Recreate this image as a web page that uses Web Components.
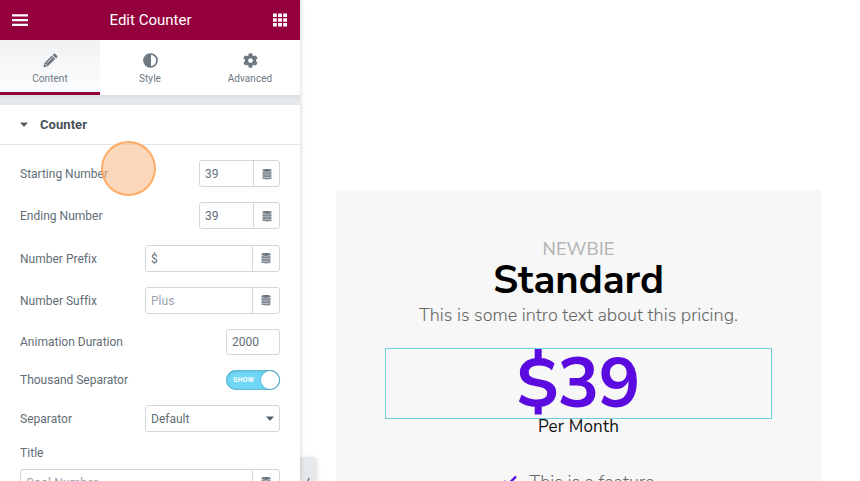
<!DOCTYPE html>
<html lang="en">
<head>
<meta charset="utf-8">
<title>Edit Counter</title>
<style>
html,body{margin:0;height:100%;overflow:hidden;background:#fff}
body{font-family:Roboto,"Liberation Sans",sans-serif}
</style>
</head>
<body>
<counter-editor></counter-editor>
<script>
const define = (name, css, html, setup) => {
  const t = document.createElement('template');
  t.innerHTML = `<style>*{box-sizing:border-box}${css}</style>${html}`;
  customElements.define(name, class extends HTMLElement {
    constructor() { super(); this.attachShadow({mode: 'open'}).append(t.content.cloneNode(true)); }
    connectedCallback() { if (setup) setup(this, this.shadowRoot); }
  });
};

/* A single line of text tracked to a given width. */
define('fit-text', ':host{display:inline-block;white-space:nowrap}span{display:inline-block}', '<span><slot></slot></span>', (el, root) => {
  const s = root.querySelector('span'), w = parseFloat(el.getAttribute('w')), n = el.textContent.length;
  s.style.letterSpacing = '0px';
  const d = (w - s.getBoundingClientRect().width) / n;
  s.style.letterSpacing = d.toFixed(3) + 'px';
});

const glyphs = {
  menu: '<svg width="18" height="14" viewBox="0 0 18 14" fill="#fff"><path d="M1 1.300h16v2.200H1zM1 6h16v2.200H1zM1 10.700h16v2.200H1z"/></svg>',
  grid: '<svg width="14" height="14" viewBox="0 0 14 14" fill="#fff"><path d="M0 .5h3.8v3.6H0zM5.1.5h3.8v3.6H5.1zM10.2.5H14v3.6h-3.8zM0 5.2h3.8v3.6H0zM5.1 5.2h3.8v3.6H5.1zM10.2 5.2H14v3.6h-3.8zM0 9.9h3.8v3.6H0zM5.1 9.9h3.8v3.6H5.1zM10.2 9.9H14v3.6h-3.8z"/></svg>',
  pencil: '<svg width="15" height="15" viewBox="0 0 15 15" fill="#6d7882"><path d="M8.800 2.700l3.400 3.400-7.400 7.200-3.900.9c-.3 0-.5-.1-.4-.4l.9-3.900zM9.600 1.900l1-1c.5-.5 1.200-.5 1.700 0l1.800 1.800c.5.5.5 1.200 0 1.700l-1.100 1z"/><path d="M4 9.900l5.200-5.200M2.400 10.700l.4 1.400 1.400.3" stroke="#f7f8f9" stroke-width=".8" fill="none"/></svg>',
  contrast: '<svg width="15" height="15" viewBox="0 0 15 15"><circle cx="7.500" cy="7.500" r="6.500" fill="none" stroke="#6d7882" stroke-width="1.700"/><path d="M8 1a6.500 6.500 0 0 0 0 13z" fill="#6d7882"/></svg>',
  gear: '<svg width="15" height="15" viewBox="0 0 512 512" fill="#6d7882"><path d="M487.400 315.700l-42.600-24.600c4.300-23.200 4.300-47 0-70.200l42.600-24.600c4.900-2.800 7.100-8.600 5.500-14-11.100-35.600-30-67.800-54.700-94.600-3.800-4.100-10-5.100-14.800-2.300L380.800 110c-17.900-15.400-38.500-27.300-60.800-35.100V25.800c0-5.600-3.900-10.500-9.400-11.700-36.700-8.200-74.300-7.800-109.200 0-5.500 1.200-9.400 6.100-9.400 11.700V75c-22.200 7.900-42.800 19.800-60.800 35.100L88.700 85.500c-4.900-2.800-11-1.900-14.800 2.300-24.700 26.700-43.600 58.900-54.700 94.600-1.700 5.400.6 11.200 5.500 14L67.300 221c-4.300 23.200-4.300 47 0 70.200l-42.600 24.600c-4.900 2.800-7.100 8.600-5.500 14 11.100 35.600 30 67.800 54.700 94.600 3.800 4.100 10 5.100 14.800 2.300l42.600-24.600c17.900 15.400 38.500 27.300 60.800 35.100v49.200c0 5.600 3.900 10.500 9.400 11.700 36.700 8.200 74.300 7.800 109.200 0 5.500-1.200 9.400-6.100 9.400-11.700v-49.200c22.200-7.900 42.800-19.800 60.800-35.100l42.600 24.600c4.900 2.800 11 1.900 14.800-2.300 24.700-26.700 43.600-58.900 54.700-94.600 1.500-5.500-.7-11.300-5.600-14.100zM256 336c-44.100 0-80-35.900-80-80s35.900-80 80-80 80 35.900 80 80-35.900 80-80 80z"/></svg>',
  data: '<svg width="10" height="12" viewBox="0 0 10 12" fill="#6d7882"><path d="M.5 2C.5.600 9.500.600 9.500 2v1.100c0 1.100-9 1.100-9 0z"/><path d="M.5 3.700q4.500 1.300 9 0V6c0 1-9 1-9 0zM.5 6.500q4.500 1.300 9 0v2c0 1-9 1-9 0zM.5 9.100q4.500 1.300 9 0v1.500c0 1.200-9 1.200-9 0z" opacity=".85"/></svg>',
  caret: '<svg width="8" height="5" viewBox="0 0 8 5" fill="#556068"><path d="M0 .4h8L4.700 4.300q-.7.600-1.400 0z"/></svg>',
  check: '<svg width="14" height="12" viewBox="0 0 14 12"><path d="M1 6l3.500 4L13 1.500" fill="none" stroke="#5b0be0" stroke-width="2.400"/></svg>',
  back: '<svg width="5" height="9" viewBox="0 0 5 9"><path d="M3.500 1L1 4.500 3.500 8" fill="none" stroke="#6d7882" stroke-width="1.300"/></svg>'
};
define('ui-icon', ':host{display:inline-flex}svg{display:block}', '', (el, root) => {
  const t = document.createElement('template');
  t.innerHTML = glyphs[el.getAttribute('name')];
  root.append(t.content);
});

define('panel-tab', `
:host{display:flex;flex:1;flex-direction:column;align-items:center;height:55px;padding-top:13px;font-size:10px;line-height:12px;color:#6d7882;border-bottom:3px solid transparent}
:host([active]){background:linear-gradient(#f1f2f4,#fcfdfe);border-bottom-color:#93003c}
::slotted(ui-icon){margin-bottom:5px}`, '<slot name="icon"></slot><slot></slot>');

define('control-row', `
:host{display:flex;justify-content:space-between;align-items:center;height:27px;font-size:12px;color:#626d76}
::slotted([slot=label]){padding-top:1px}`, '<slot name="label"></slot><slot></slot>');

define('text-field', `
:host{display:flex;height:27px;width:135px;border:1px solid #d2d7db;border-radius:3px;background:#fff;color:#626d76;font-size:12px;line-height:26px;overflow:hidden}
:host([muted]){color:#9aa4ad}
.v{flex:1;padding-left:5px}
.d{width:27px;border-left:1px solid #d2d7db;display:flex;align-items:center;justify-content:center}
:host([narrow]) .d{width:26px}
:host([plain]) .d{display:none}
:host([select]) .d{border:0;width:19px}`, '<div class="v"><slot></slot></div><div class="d"><slot name="end"></slot></div>');

define('toggle-switch', `
:host{display:flex;align-items:center;justify-content:space-between;width:54px;height:20px;border-radius:10px;background:#71d7f7;box-shadow:inset 0 0 0 1px #65b8d2,inset 0 1px 3px #4eacc8;padding:0 1px 0 7px;color:#fff;font-size:7px;font-weight:700}
i{width:18px;height:18px;border-radius:50%;background:#fff;box-shadow:0 0 2px #4a8da3}`, '<slot></slot><i></i>');

define('editor-panel', `
:host{display:block;position:relative;width:300px;height:481px;background:#fff;box-shadow:0 0 5px rgba(0,0,0,.2);z-index:1;flex:none}
header{display:flex;height:40px;background:#93003c;color:#fff;align-items:center;justify-content:space-between;padding:0 13px 0 11px;font-size:15px}
header fit-text{margin-left:-1px}
nav{display:flex;height:55px}
.gap{height:10px;background:linear-gradient(#dcdfe2,#e6e9ec 5px)}
.section{display:flex;align-items:center;height:40px;border-bottom:1px solid #e2e5e8;padding-left:20px;gap:12px;font-size:13px;font-weight:700;color:#495157}
.rows{display:flex;flex-direction:column;gap:15px;padding:15px 20px 0;height:336px;overflow:hidden}
.rows>*{flex:none}
.title{font-size:12px;line-height:12px;height:9px;padding-top:3px;display:flex;align-items:center;color:#626d76}
.click{position:absolute;left:101px;top:141px;width:55px;height:55px;border-radius:50%;border:2px solid rgba(255,160,82,.8);background:rgba(250,182,130,.55)}`, `
<header><ui-icon name="menu"></ui-icon><fit-text w="82">Edit Counter</fit-text><ui-icon name="grid"></ui-icon></header>
<nav><panel-tab active><ui-icon slot="icon" name="pencil"></ui-icon><fit-text w="35.500">Content</fit-text></panel-tab><panel-tab><ui-icon slot="icon" name="contrast"></ui-icon><fit-text w="22">Style</fit-text></panel-tab><panel-tab><ui-icon slot="icon" name="gear"></ui-icon><fit-text w="44.500">Advanced</fit-text></panel-tab></nav>
<div class="gap"></div>
<div class="section"><ui-icon name="caret"></ui-icon><fit-text w="47">Counter</fit-text></div>
<div class="rows">
<control-row><fit-text slot="label" w="88">Starting Number</fit-text><text-field narrow style="width:81px">39<ui-icon slot="end" name="data"></ui-icon></text-field></control-row>
<control-row><fit-text slot="label" w="82.500">Ending Number</fit-text><text-field narrow style="width:81px">39<ui-icon slot="end" name="data"></ui-icon></text-field></control-row>
<control-row style="height:28px"><fit-text slot="label" w="76.500">Number Prefix</fit-text><text-field>$<ui-icon slot="end" name="data"></ui-icon></text-field></control-row>
<control-row style="margin-top:-.5px"><fit-text slot="label" w="76">Number Suffix</fit-text><text-field muted><fit-text w="23.500">Plus</fit-text><ui-icon slot="end" name="data"></ui-icon></text-field></control-row>
<control-row style="height:26px"><fit-text slot="label" w="103">Animation Duration</fit-text><text-field plain style="width:54px;height:26px;line-height:25px">2000</text-field></control-row>
<control-row style="height:20px"><fit-text slot="label" w="108">Thousand Separator</fit-text><toggle-switch><fit-text w="21">SHOW</fit-text></toggle-switch></control-row>
<control-row><fit-text slot="label" w="52">Separator</fit-text><text-field select><fit-text w="38.500">Default</fit-text><ui-icon slot="end" name="caret"></ui-icon></text-field></control-row>
<div class="title"><fit-text w="23.500">Title</fit-text></div>
<text-field muted style="width:260px;margin-top:-2px"><fit-text w="72">Cool Number</fit-text><ui-icon slot="end" name="data"></ui-icon></text-field>
</div>
<div class="click"></div>`);

define('pricing-card', `
:host{display:flex;flex-direction:column;align-items:center;width:485px;height:291px;background:#f7f7f7;padding:48px 49px 0;overflow:hidden;font-family:"Nunito Sans",Nunito,Lato,sans-serif}
div{flex:none}
.tag{height:22px;line-height:22px;font-size:18px;color:#b4b4b4;font-weight:500}
.name{height:42px;line-height:40px;font-size:40px;color:#000;font-weight:700}
.intro{height:26px;line-height:26px;font-size:18px;color:#686868;font-weight:300}
.price{margin-top:20px;width:387px;height:71px;border:1px solid #71cfe0;text-align:center;font-size:70px;line-height:70px;font-weight:700;color:#5b0be0}
.price fit-text{margin-left:-1px}
.per{height:17px;line-height:15px;font-size:17px;color:#111}
.feature{margin-top:34px;display:flex;gap:13px;line-height:24px;height:24px;font-size:18px;font-weight:300;color:#686868}
.feature ui-icon{margin-top:5px}`, `
<div class="tag"><fit-text w="72">NEWBIE</fit-text></div>
<div class="name"><fit-text w="171">Standard</fit-text></div>
<div class="intro"><fit-text w="319">This is some intro text about this pricing.</fit-text></div>
<div class="price"><fit-text w="123">$39</fit-text></div>
<div class="per"><fit-text w="81">Per Month</fit-text></div>
<div class="feature"><ui-icon name="check"></ui-icon><fit-text w="125">This is a feature</fit-text></div>`);

define('counter-editor', `
:host{display:flex;width:860px;height:481px;overflow:hidden;background:#fff;position:relative}
main{flex:1;display:flex;padding:190px 0 0 36px}
.collapse{position:absolute;z-index:0;left:300px;top:457px;width:16px;height:48px;background:#e6e9ec;border-radius:0 3px 3px 0;box-shadow:1px 1px 4px rgba(0,0,0,.15);display:flex;align-items:center;justify-content:center}`, `
<editor-panel></editor-panel><main><pricing-card></pricing-card></main>
<div class="collapse"><ui-icon name="back"></ui-icon></div>`);
</script>
</body>
</html>
